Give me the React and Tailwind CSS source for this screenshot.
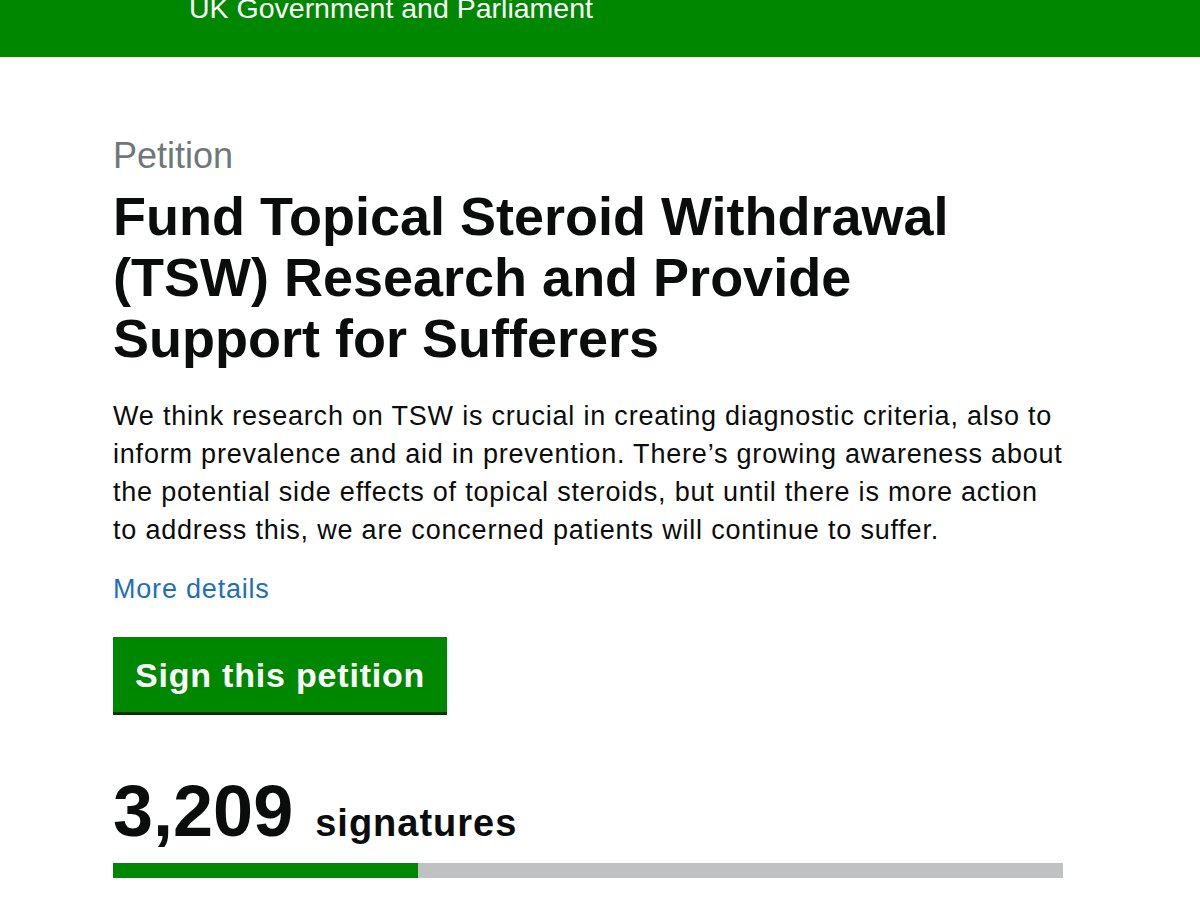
import React from 'react';

const signatureCount = 3209;
const progress = 32.1; // share of the next threshold

export default function App() {
  return (
    <div className="min-h-[900px] bg-white font-['Liberation_Sans',Arial,sans-serif] text-[#0b0c0c]">
      {/* Site header */}
      <header className="h-[57px] overflow-hidden bg-[#008700] pl-[189px]">
        <div className="-mt-[6px] text-[28.5px] leading-none text-white">
          UK Government and Parliament
        </div>
      </header>

      <main className="w-[960px] pl-[113px] pt-[79px] box-content">
        <div className="text-[36px] leading-[40px] text-[#6f777b]">Petition</div>

        <h1 className="mt-[10px] w-[950px] text-[54px] font-bold leading-[61px]">
          Fund Topical Steroid Withdrawal (TSW) Research and Provide Support for Sufferers
        </h1>

        <p className="mt-[28px] w-[950px] text-[27px] leading-[38px] tracking-[0.8px]">
          We think research on TSW is crucial in creating diagnostic criteria, also to inform
          prevalence and aid in prevention. There’s growing awareness about the potential side
          effects of topical steroids, but until there is more action to address this, we are
          concerned patients will continue to suffer.
        </p>

        <div className="mt-[21px] text-[27px] leading-[38px] tracking-[0.8px]">
          <a href="#details" className="text-[#1d70b8]">
            More details
          </a>
        </div>

        <button
          type="button"
          className="mt-[29px] bg-[#008700] px-[22px] py-[17.5px] text-[34px] font-bold leading-[40px] tracking-[0.8px] text-white shadow-[0_3px_0_#003300]"
        >
          Sign this petition
        </button>

        {/* Signature count */}
        <div className="mt-[63px] flex items-baseline gap-[22px]">
          <span className="text-[72px] font-bold leading-none">
            {signatureCount.toLocaleString('en-GB')}
          </span>
          <span className="text-[38px] font-bold leading-none tracking-[1px]">signatures</span>
        </div>

        <div className="mt-[16px] h-[15px] w-[950px] bg-[#bfc1c3]">
          <div className="h-full bg-[#008700]" style={{ width: `${progress}%` }} />
        </div>
      </main>
    </div>
  );
}
